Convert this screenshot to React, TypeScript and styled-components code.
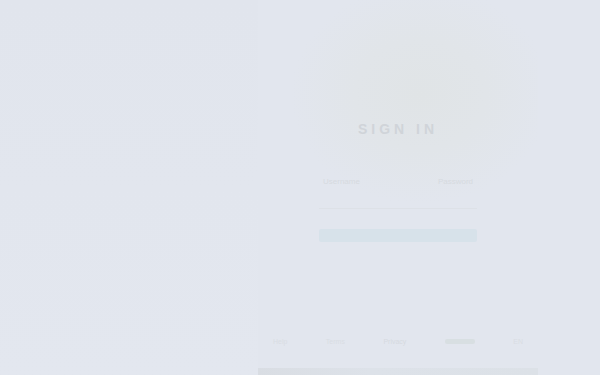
import { ReactElement } from 'react'
import styled, { createGlobalStyle } from 'styled-components'

const GlobalStyle = createGlobalStyle`
  html, body {
    margin: 0;
    padding: 0;
    background: #e2e6ee;
    font-family: "Liberation Sans", Arial, sans-serif;
  }
`

const Page = styled.div`
  width: 600px;
  height: 375px;
  overflow: hidden;
  display: grid;
  grid-template-columns: 258px 280px 1fr;
  background: #e2e6ee;
`

const Aside = styled.div`
  background: linear-gradient(180deg, #e1e5ed 0%, #e3e7ef 100%);
`

const Card = styled.div`
  display: flex;
  flex-direction: column;
  align-items: center;
  background: radial-gradient(ellipse 130px 110px at 58% 25%, #e0e4e6 0%, #e1e5e9 50%, #e2e6ee 100%);
`

const Title = styled.div`
  margin-top: 121px;
  font-size: 14px;
  letter-spacing: 4px;
  color: #d0d4d9;
  font-weight: 700;
`

const FieldRow = styled.div`
  margin-top: 40px;
  width: 150px;
  display: flex;
  justify-content: space-between;
  font-size: 8px;
  color: #d6dadf;
`

const Field = styled.div`
  margin-top: 14px;
  width: 158px;
  height: 8px;
  border-bottom: 1px solid #dde1e7;
`

const Button = styled.div`
  margin-top: 20px;
  width: 158px;
  height: 13px;
  background: #d7e2ea;
  border-radius: 2px;
`

const Footer = styled.div`
  margin-top: 96px;
  width: 250px;
  display: flex;
  justify-content: space-between;
  align-items: center;
  font-size: 7px;
  color: #d9dde3;
`

const FooterLink = styled.span<{ $tone?: string }>`
  color: ${(p) => p.$tone || '#d9dde3'};
`

const Pill = styled.span`
  width: 30px;
  height: 5px;
  background: #d8dfe2;
  border-radius: 2px;
`

const BottomBar = styled.div`
  margin-top: 23px;
  width: 280px;
  height: 10px;
  background: linear-gradient(90deg, #d9dde3 0%, #dde2e9 40%, #dce1e7 100%);
`

const Rest = styled.div`
  background: #e2e6ee;
`

export default function App(): ReactElement {
  return (
    <>
      <GlobalStyle />
      <Page>
        <Aside />
        <Card>
          <Title>SIGN IN</Title>
          <FieldRow>
            <span>Username</span>
            <span>Password</span>
          </FieldRow>
          <Field />
          <Button />
          <Footer>
            <FooterLink>Help</FooterLink>
            <FooterLink>Terms</FooterLink>
            <FooterLink $tone="#d6dae0">Privacy</FooterLink>
            <Pill />
            <FooterLink>EN</FooterLink>
          </Footer>
          <BottomBar />
        </Card>
        <Rest />
      </Page>
    </>
  )
}
